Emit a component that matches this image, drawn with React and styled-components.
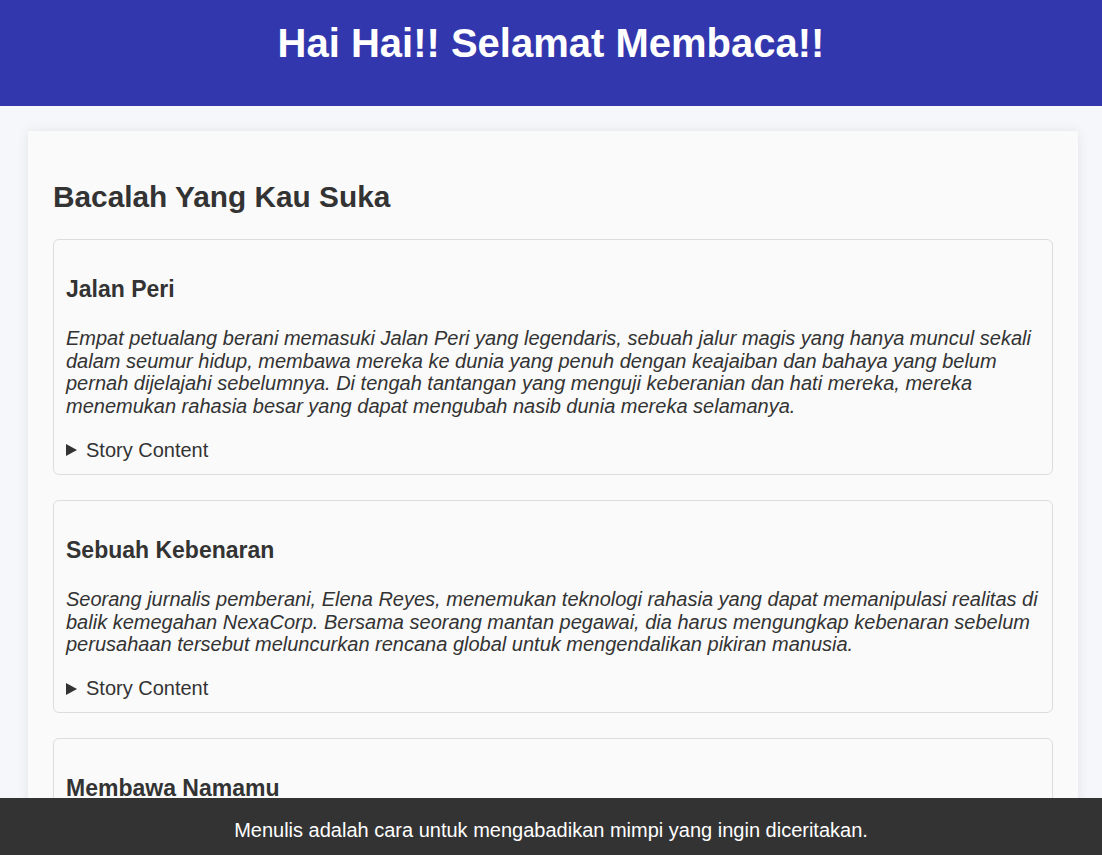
import React from "react";
import styled, { createGlobalStyle } from "styled-components";

const Global = createGlobalStyle`
  html, body { margin: 0; padding: 0; }
  body {
    background: #f6f7fa;
    font-family: "Liberation Sans", Arial, sans-serif;
    color: #333;
    font-size: 20px;
  }
`;

const Header = styled.header`
  background: #3337ad;
  height: 106px;
  display: flex;
  justify-content: center;
  padding-top: 20px;
  box-sizing: border-box;
`;

const Title = styled.h1`
  margin: 0;
  color: #fff;
  font-size: 40px;
  font-weight: bold;
  line-height: 46px;
`;

const Main = styled.main`
  margin: 25px 24px 90px 28px;
  background: #fafafa;
  box-shadow: 0 0 12px rgba(0, 0, 0, 0.08);
  padding: 25px 25px;
`;

const SectionTitle = styled.h2`
  margin: 24px 0 25px;
  font-size: 29.8px;
  line-height: 34px;
  font-weight: bold;
  color: #333;
`;

const List = styled.div`
  display: flex;
  flex-direction: column;
  gap: 25px;
`;

const Card = styled.article`
  border: 1px solid #ddd;
  border-radius: 6px;
  padding: 12px;
`;

const CardTitle = styled.h3`
  margin: 24px 0 24px;
  font-size: 23px;
  line-height: 27px;
  font-weight: bold;
  color: #333;
`;

const Synopsis = styled.p`
  margin: 0 0 21.6px;
  font-style: italic;
  font-size: 20px;
  line-height: 22.6px;
  color: #333;
`;

const Details = styled.details`
  font-size: 20px;
  line-height: 23px;
`;

const Summary = styled.summary`
  cursor: pointer;
  color: #333;
  list-style: none;
  display: flex;
  align-items: center;
  &::-webkit-details-marker { display: none; }
  &::before {
    content: "";
    width: 0;
    height: 0;
    border-left: 11px solid #333;
    border-top: 6px solid transparent;
    border-bottom: 6px solid transparent;
    margin-right: 9px;
  }
`;

const Footer = styled.footer`
  position: fixed;
  left: 0;
  right: 0;
  bottom: 0;
  height: 57px;
  background: #333;
  color: #fff;
  display: flex;
  align-items: center;
  justify-content: center;
  padding-top: 7px;
  box-sizing: border-box;
  font-size: 20px;
`;

const stories = [
  {
    title: "Jalan Peri",
    text: "Empat petualang berani memasuki Jalan Peri yang legendaris, sebuah jalur magis yang hanya muncul sekali dalam seumur hidup, membawa mereka ke dunia yang penuh dengan keajaiban dan bahaya yang belum pernah dijelajahi sebelumnya. Di tengah tantangan yang menguji keberanian dan hati mereka, mereka menemukan rahasia besar yang dapat mengubah nasib dunia mereka selamanya.",
  },
  {
    title: "Sebuah Kebenaran",
    text: "Seorang jurnalis pemberani, Elena Reyes, menemukan teknologi rahasia yang dapat memanipulasi realitas di balik kemegahan NexaCorp. Bersama seorang mantan pegawai, dia harus mengungkap kebenaran sebelum perusahaan tersebut meluncurkan rencana global untuk mengendalikan pikiran manusia.",
  },
  {
    title: "Membawa Namamu",
    text: "Sebuah kisah tentang cinta, kehilangan, dan janji yang terus dibawa melintasi waktu dan jarak, hingga akhirnya menemukan jalan pulang.",
  },
];

export default function App() {
  return (
    <>
      <Global />
      <Header>
        <Title>Hai Hai!! Selamat Membaca!!</Title>
      </Header>
      <Main>
        <SectionTitle>Bacalah Yang Kau Suka</SectionTitle>
        <List>
          {stories.map((s) => (
            <Card key={s.title}>
              <CardTitle>{s.title}</CardTitle>
              <Synopsis>{s.text}</Synopsis>
              <Details>
                <Summary>Story Content</Summary>
              </Details>
            </Card>
          ))}
        </List>
      </Main>
      <Footer>Menulis adalah cara untuk mengabadikan mimpi yang ingin diceritakan.</Footer>
    </>
  );
}
